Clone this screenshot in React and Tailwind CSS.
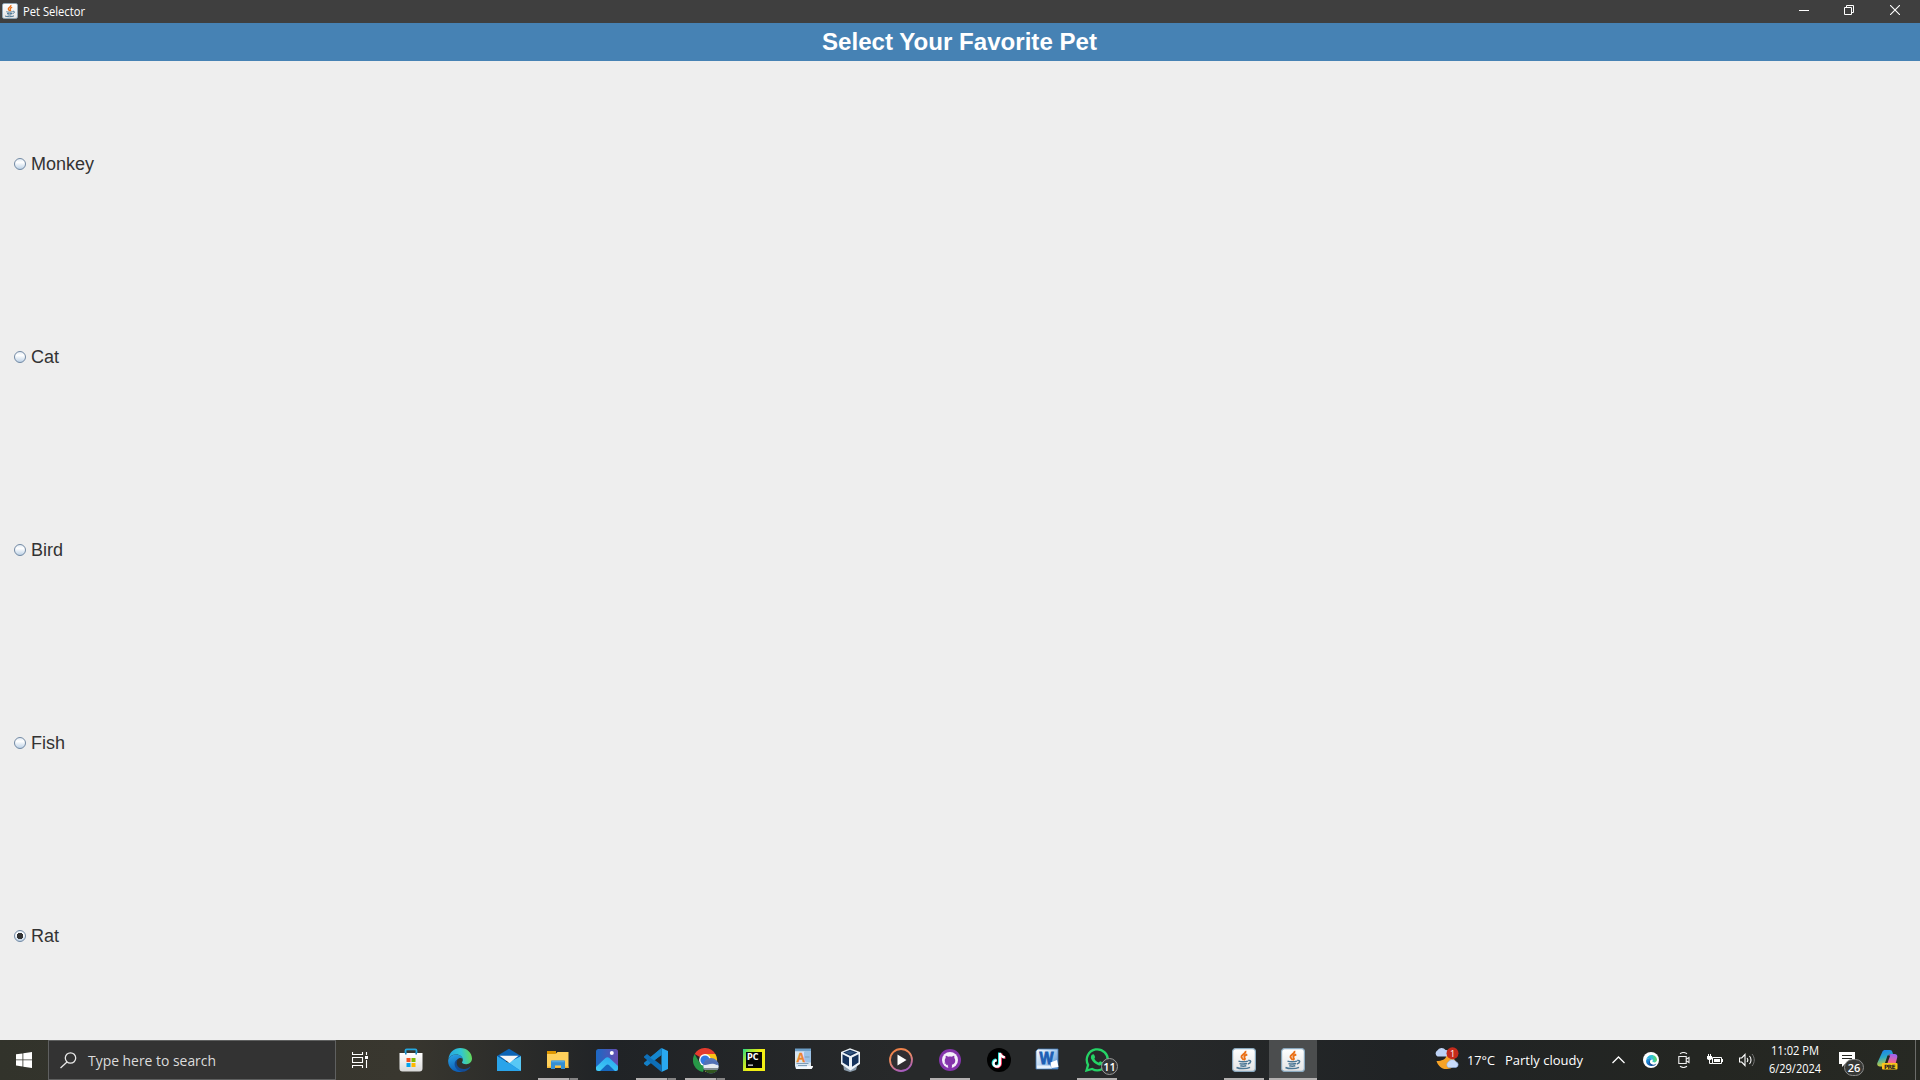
import React, { useState } from "react";

const S = ({ w = 24, h = w, children, className = "" }) => (
  <svg width={w} height={h} viewBox={`0 0 ${w} ${h}`} className={`block shrink-0 ${className}`}>
    {children}
  </svg>
);

const Java = ({ size = 24 }) => (
  <svg width={size} height={size} viewBox="0 0 24 24" className="block shrink-0">
    <defs>
      <linearGradient id="jbg" x1="0" y1="0" x2="0" y2="1">
        <stop offset="0" stopColor="#ffffff" />
        <stop offset="1" stopColor="#e4e4e4" />
      </linearGradient>
    </defs>
    <rect x=".6" y=".6" width="22.8" height="22.8" rx="3" fill="url(#jbg)" stroke="#8aa9bf" strokeWidth="1.2" />
    <path d="M13.300 3c1.500 2.600-4.600 3.800-3.900 6 .3 1.200 1.800 1.800 2 3.200M15.300 6.500c-2.300.7-3.700 1.900-2.700 3.300.6.8.4 1.600-.6 2.200" fill="none" stroke="#ea6f16" strokeWidth="1.900" />
    <path d="M6.500 13.100c2.500.9 6.500.8 9.500 0M7.500 15.600c2.500.7 5 .6 7.600 0M8.300 17.700c2 .6 4 .6 6 0M4.500 19.500c3 1.500 10 1.500 13.500-.2M16.200 12.500c3.400-.7 3.300 2.500-.4 3.500" fill="none" stroke="#4a7694" strokeWidth="1.500" />
  </svg>
);

const Store = () => (
  <S>
    <defs>
      <linearGradient id="st" x1="0" y1="0" x2="0" y2="1"><stop stopColor="#fff" /><stop offset="1" stopColor="#d9d9d9" /></linearGradient>
    </defs>
    <path d="M6.500 6V2.600c0-.8.4-1.200 1.200-1.200h8.600c.8 0 1.200.4 1.200 1.200V6" fill="none" stroke="#25a8e0" strokeWidth="1.800" />
    <path d="M.5 5h23v15.500a3 3 0 0 1-3 3h-17a3 3 0 0 1-3-3z" fill="url(#st)" />
    <path d="M6 4.500h1.600v2H6zM16.400 4.500H18v2h-1.600z" fill="#1682bd" />
    <path d="M7.500 10h4v4h-4z" fill="#f25022" /><path d="M12.500 10h4v4h-4z" fill="#7fba00" />
    <path d="M7.500 15h4v4h-4z" fill="#00a4ef" /><path d="M12.500 15h4v4h-4z" fill="#ffb900" />
  </S>
);

const Edge = ({ size = 24 }) => (
  <svg width={size} height={size} viewBox="0 0 24 24" className="block shrink-0">
    <defs>
      <linearGradient id="ea" x1="0" y1=".4" x2="1" y2=".3"><stop stopColor="#25a7e2" /><stop offset=".55" stopColor="#31c6d3" /><stop offset="1" stopColor="#68dc50" /></linearGradient>
      <linearGradient id="eb" x1="0" y1="0" x2=".3" y2="1"><stop stopColor="#2aa5e6" /><stop offset="1" stopColor="#0d60b8" /></linearGradient>
    </defs>
    <path d="M.4 11C1.200 4.400 6.300 0 12.200 0 19.200 0 24 5 24 10.500c0 3.300-2.500 5.700-5.700 5.700-3 0-4.700-1.200-4.300-2.100.4-.7.8-1.200.8-2.200C14.800 9 12 6.500 8.300 6.500 4.600 6.500 1.500 8.300.4 11z" fill="url(#ea)" />
    <path d="M.3 11.500C1.600 8.200 4.800 6.500 8.300 6.500c3.500 0 5.700 2 6.300 4.200-2.800-2-6.600.4-6.600 4.500 0 4.200 3.600 7.200 7.600 7.500-1.400.9-3 1.300-4.600 1.300C4.500 24-.8 18.500.3 11.500z" fill="url(#eb)" />
    <path d="M9.800 11.500C8.300 13 8 17 10.700 19.300c3 2.500 7.700 2.200 10.900-.4.700-.5 1 0 .6.500-2 2.600-4.500 4.100-7.500 4.300C9.600 23.300 6 19.300 6.700 15c.3-1.700 1.400-2.900 3.100-3.500z" fill="#134c96" />
  </svg>
);

const Mail = () => (
  <S>
    <path d="M0 8 12 0.800 24 8v5H0z" fill="#0b63b5" />
    <path d="M0 8.200 12 15.500 24 8.200V23H0z" fill="#2fa9ea" />
    <path d="M24 8.200V23L10.500 15z" fill="#58c8f5" />
    <path d="M0 23h24L12 14.700z" fill="#1e96e6" />
    <path d="M0 8.200 24 23H0z" fill="#2aa4ea" />
    <path d="M2.500 7.700h19L12.500 15z" fill="#f5f5f5" />
  </S>
);

const Folder = () => (
  <S>
    <path d="M1 3h9v3H1z" fill="#df9700" />
    <path d="M1 6h8.500l2-2H22.500v16H1z" fill="#ffd05b" />
    <path d="M1 18.500h21.500V20H1z" fill="#f4b735" />
    <path d="M5 13.500C5 13 5.300 12.600 6 12.600h12c.7 0 1 .4 1 .9V21h-4v-3.500H9V21H5z" fill="#348fd3" />
    <path d="M5.500 12.700h13v1.600h-13z" fill="#50a8e4" />
  </S>
);

const Photos = () => (
  <S>
    <defs>
      <linearGradient id="pa" x1="0" y1="0" x2="1" y2="0"><stop stopColor="#1b69c4" /><stop offset="1" stopColor="#654db0" /></linearGradient>
      <linearGradient id="pb" x1="0" y1="1" x2=".6" y2="0"><stop stopColor="#45d2f8" /><stop offset="1" stopColor="#2aaaf0" /></linearGradient>
      <clipPath id="pc"><rect x="1" y="1" width="22" height="22" rx="2.500" /></clipPath>
    </defs>
    <g clipPath="url(#pc)">
      <path d="M1 1h22v22H1z" fill="url(#pa)" />
      <path d="m1 19 9.500-9c1.200-1.100 2.700-1.100 3.900 0L25 20v4H1z" fill="url(#pb)" />
      <path d="m5 23 6-5.700c1-1 2.200-1 3.200 0L20 23z" fill="#1668bf" />
    </g>
    <circle cx="16.800" cy="5" r="2" fill="#fff" />
  </S>
);

const VSCode = () => (
  <S>
    <path d="M17.500 0 24 3v18l-6.500 3z" fill="#29a9f2" />
    <path d="M17.500 0v6.700L3 18.200 0 16v-1.200z" fill="#1480c7" />
    <path d="M0 8.500 3 6l14.500 11.300V24L0 9.500z" fill="#0e6fb8" />
    <path d="M17.500 0v7L10 12.500 6 9.500z" fill="#1587cf" />
  </S>
);

const Chrome = () => (
  <svg width="26" height="26" viewBox="0 0 26 26" className="block shrink-0">
    <path d="M12 12 1.600 6A12 12 0 0 1 22.400 6z" fill="#e33b2e" />
    <path d="M12 6h10.400A12 12 0 0 1 12 24l5.200-9z" fill="#fbc116" />
    <path d="M1.600 6 6.800 15 12 18l-2 6A12 12 0 0 1 1.600 6z" fill="#279847" />
    <circle cx="12" cy="12" r="5.900" fill="#fff" /><circle cx="12" cy="12" r="4.600" fill="#3278e2" />
    <clipPath id="av"><circle cx="18" cy="17.800" r="7.700" /></clipPath>
    <g clipPath="url(#av)">
      <path d="M10 10h16v16H10z" fill="#5878bd" />
      <path d="M10 18c3-5 9-5 16 0v3H10z" fill="#e5eaf1" />
      <path d="M10 15c5-4 9-3 16 0l-2 2c-6-3-8 0-14 0z" fill="#5271b5" />
      <path d="M10 20h16v2H10z" fill="#828d95" /><path d="M10 22h16v4H10z" fill="#31551f" />
    </g>
  </svg>
);

const PyCharm = () => (
  <S>
    <defs><linearGradient id="py" x1="0" y1="0" x2=".6" y2=".4"><stop stopColor="#22d88b" /><stop offset=".5" stopColor="#a5e634" /><stop offset="1" stopColor="#f2ee15" /></linearGradient></defs>
    <path d="M1 1h22v22H1z" fill="url(#py)" /><path d="M4 4h16v16H4z" fill="#060606" />
    <text x="5" y="12" fill="#fff" fontSize="8.500" fontWeight="700" textLength="11.500" lengthAdjust="spacingAndGlyphs" fontFamily="DejaVu Sans, sans-serif">PC</text>
    <path d="M6 16.500h5v1.300H6z" fill="#ddd" />
  </S>
);

const WordPad = () => (
  <S>
    <path d="M4 1h16v17l1 3H5L4 18z" fill="#dbe8f4" /><path d="M4 .5h16v3H4z" fill="#6d9fc8" />
    <path d="M4 3.500h10v11H4z" fill="#d9e5f1" /><path d="M13 3.500h7v11h-7z" fill="#9cc2e6" />
    <text x="5.500" y="13.500" fill="#ee842b" stroke="#ee842b" strokeWidth=".4" fontSize="12" fontWeight="700" fontFamily="Liberation Sans, sans-serif">A</text>
    <path d="M14 9h4.500M5.500 15.500h12M7 17.500h9" stroke="#7e9eb9" />
    <path d="M16 18h6c0 1.800-1 2.700-2 2.700H6.500c-1 0-1.500-.7-1.500-1.500h11z" fill="#f9fbfd" />
  </S>
);

const VBox = () => (
  <S>
    <path d="M5 15h15l-2 7-6 2-6-2z" fill="#8c9dad" />
    <path d="M12 .3 22 4v12l-9.500 6.500L3 16V4z" fill="#edf3f8" />
    <path d="M12 1.700 19.500 4.500 12.300 8 5 4.500zM4.500 6.300l6.500 3.200v9L4.500 14.500zM20.500 6.300v8.200L14 18.700V9.500z" fill="#15325b" />
    <path d="m7 4.600 5-1.600 5 1.600-5 2z" fill="#31557f" />
  </S>
);

const Media = () => (
  <S>
    <defs><linearGradient id="me" x1=".2" y1="0" x2=".6" y2="1"><stop stopColor="#ef7f43" /><stop offset=".45" stopColor="#ec8b63" /><stop offset="1" stopColor="#a55bc0" /></linearGradient></defs>
    <circle cx="12" cy="12" r="11" fill="#302e32" stroke="url(#me)" strokeWidth="1.800" />
    <path d="M8.500 6.500v11l9-5.500z" fill="#fff" />
  </S>
);

const GitHub = () => (
  <S>
    <circle cx="12" cy="12" r="11" fill="#8534ac" />
    <circle cx="12" cy="12" r="8" fill="#f4effa" />
    <path d="M9.900 20.500v-3c-2.700-.4-4-1.900-4-4.800 0-1.300.4-2.200 1.100-2.900-.2-.8-.2-1.800.2-2.600 1 0 1.800.5 2.500 1 1.500-.4 3.100-.4 4.600 0 .7-.5 1.500-1 2.500-1 .4.800.4 1.800.2 2.600.7.7 1.100 1.600 1.100 2.900 0 2.900-1.300 4.400-4 4.800v3z" fill="#8534ac" transform="translate(12 12) scale(.86) translate(-12 -12)" />
    <path d="M6.500 15c1.400.2 1.300 2.200 3.800 1.800" stroke="#8534ac" strokeWidth=".9" fill="none" />
    <path d="M10.300 16.500h3.400v4.500h-3.400z" fill="#8534ac" />
  </S>
);

const TikTok = () => (
  <S>
    <circle cx="12" cy="12" r="12" fill="#000" />
    <g fill="none" strokeWidth="2.600">
      <path d="M12.300 4.500v10.500a3.200 3.200 0 1 1-3.200-3.200M12.300 5c.4 2.500 2 4 4.800 4.200" stroke="#26e5dc" />
      <path d="M13.700 5.500v10.500a3.200 3.200 0 0 1-5.500 2M14 5.500c.4 2.500 2 4 4.500 4.200" stroke="#f52c56" />
      <path d="M13 5v10.500a3.200 3.200 0 1 1-3.200-3.200M13 5c.4 2.500 2 4 4.800 4.200" stroke="#fff" strokeWidth="2.200" />
    </g>
  </S>
);

const Word = () => (
  <S>
    <defs><linearGradient id="wo" x1="0" y1="0" x2="1" y2=".8"><stop stopColor="#fff" /><stop offset=".5" stopColor="#b9d5f3" /><stop offset="1" stopColor="#5b93d2" /></linearGradient></defs>
    <path d="M3 1h20v20H1V3z" fill="url(#wo)" stroke="#4278b5" strokeWidth=".8" />
    <text x="4.500" y="16" fill="#1c5fb4" stroke="#1c5fb4" strokeWidth=".9" fontSize="16.500" fontWeight="700" textLength="14" lengthAdjust="spacingAndGlyphs" fontFamily="Liberation Sans, sans-serif">W</text>
    <path d="m15.500 14.500 6.500-2.500 1.500 7-7 1z" fill="#fff" /><path d="M2 17.500h13l2 3H2z" fill="#e8f1fb" />
  </S>
);

const WhatsApp = () => (
  <S>
    <path d="m1.500 22.500 1.600-5.600A10.500 10.500 0 1 1 7.200 21z" fill="none" stroke="#25d366" strokeWidth="2.300" />
    <path d="M8.400 6.200c.5 0 .7.200.9.700l.8 2c.1.400-.8 1.500-.8 1.700.8 1.900 2.200 3.200 4.200 4 .4 0 1.200-1.400 1.700-1.400l2.300 1.100c.4.200.3 1.100 0 1.700-.7 1.300-2.600 1.700-4 1.200-3.700-1.200-5.700-3.300-7.200-6.100-.8-1.700-.3-4.900 2.100-4.900z" fill="#25d366" />
  </S>
);

const Weather = () => (
  <S w={25}>
    <path d="M14 5c-1 5-5 9-11.500 9C4 19 8 22.500 13 22c5 0 8.500-3 9-7.500z" fill="#f6a328" />
    <path d="M12 9c0 3-3 4.500-9.500 5L2 10z" fill="#202325" />
    <path d="M3.500 9.500a3.400 3.400 0 0 1-.2-6A5 5 0 0 1 11.600 3c2.500-.2 3.500 1.500 3.200 3.300 0 2-1.300 3.200-3 3.200z" fill="#bdd2f5" />
    <path d="M14.500 20.500a3.200 3.200 0 0 1 0-5.700 4.300 4.300 0 0 1 7.400-.1 3 3 0 0 1 .1 5.800z" fill="#c8dbfa" stroke="#8aabe0" strokeWidth=".6" />
    <circle cx="18.500" cy="6.200" r="6" fill="#c42b1c" />
    <text x="18.500" y="9.500" textAnchor="middle" fill="#fff" fontSize="9" fontFamily="Open Sans, sans-serif">1</text>
  </S>
);

const Copilot = () => (
  <S w={21} h={21}>
    <defs>
      <linearGradient id="ca" x1="0" y1="0" x2=".2" y2="1"><stop stopColor="#1b7cf2" /><stop offset=".5" stopColor="#2ba9c5" /><stop offset="1" stopColor="#c9cb35" /></linearGradient>
      <linearGradient id="cb" x1=".5" y1="0" x2=".3" y2="1"><stop stopColor="#9a63f2" /><stop offset=".6" stopColor="#ef6494" /><stop offset="1" stopColor="#f79a50" /></linearGradient>
    </defs>
    <path d="M5.500 1.500C6 .5 7 0 8 0h5c1.400 0 2 .8 2.400 2l.6 2h-2c-2 0-2.600 1-3 2.500L8.500 14C8 15.600 7 16.500 5.500 16.500H3C.8 16.500-.2 15 .3 13z" fill="url(#ca)" />
    <path d="M11 6.500C11.500 5 12.200 4 14 4h3.500c2.200 0 3.200 1.500 2.700 3.500L18 16H8.200z" fill="url(#cb)" />
    <path d="M10.500 5.500h2.700L10.500 13H8z" fill="#252722" />
    <rect x="5" y="13" width="15.500" height="6.500" rx="1" fill="#fcc51b" />
    <text x="7" y="18.500" fill="#222" fontSize="6" fontWeight="700" textLength="11.500" fontFamily="DejaVu Sans, sans-serif">PRE</text>
  </S>
);

const apps = [
  { I: Store }, { I: Edge }, { I: Mail }, { I: Folder, run: "multi" }, { I: Photos },
  { I: VSCode, run: "multi" }, { I: Chrome, run: "multi", shift: "translate-x-px translate-y-px" }, { I: PyCharm }, { I: WordPad },
  { I: VBox, shift: "-translate-x-0.5" }, { I: Media }, { I: GitHub, run: "one" }, { I: TikTok }, { I: Word, shift: "-translate-x-px" },
  { I: WhatsApp, run: "one", badge: "11" }, {}, {}, { I: Java, run: "one" }, { I: Java, run: "active" },
];

const TaskButton = ({ I, run, badge, shift = "" }) => (
  <div className={`relative flex h-10 w-12 items-center justify-center ${run === "active" ? "bg-[#4b4d4e]" : ""}`}>
    {I && <div className={shift}><I /></div>}
    {badge && (
      <span className="absolute left-[28px] top-[18px] flex size-[17px] items-center justify-center rounded-full border border-[#999] bg-[#333536] text-[11px] font-semibold leading-none text-white">{badge}</span>
    )}
    {run && (
      <div className={`absolute bottom-0 flex h-0.5 ${run === "active" ? "w-12" : "w-10"}`}>
        <div className="flex-1 bg-[#b3b0b0]" />
        {run === "multi" && <div className="w-[9px] border-l border-[#555] bg-[#858484]" />}
      </div>
    )}
  </div>
);

const Fit = ({ w, size, color = "#fff", y, h, children, weight = 400, font = "Open Sans, Noto Sans, sans-serif" }) => (
  <svg width={w} height={h} className="block shrink-0 overflow-visible">
    <text x="0" y={y} fontSize={size} fill={color} fontWeight={weight} textLength={w} lengthAdjust="spacingAndGlyphs" fontFamily={font}>{children}</text>
  </svg>
);

const Radio = ({ checked }) => (
  <S w={12}>
    <defs><linearGradient id="rad" x1="0" y1="0" x2="0" y2="1"><stop stopColor="#dfe9f3" /><stop offset=".35" stopColor="#ffffff" /><stop offset="1" stopColor="#b9cfe5" /></linearGradient></defs>
    <circle cx="6" cy="6" r="5.500" fill="url(#rad)" stroke="#7289a3" />
    {checked && <path d="M4 3h4v1h1v4H8v1H4V8H3V4h1z" fill="#333" />}
  </S>
);

const pets = ["Monkey", "Cat", "Bird", "Fish", "Rat"];

export default function App() {
  const [pet, setPet] = useState("Rat");
  return (
    <div className="flex h-[1080px] w-[1920px] flex-col overflow-hidden bg-[#eeeeee] font-['Open_Sans','Noto_Sans',sans-serif]">
      <header className="flex h-[23px] shrink-0 items-center bg-[#3f3f3f]">
        <div className="ml-0.5 mb-px"><Java size={16} /></div>
        <div className="ml-[5px]"><Fit w={62} size={12} h={23} y={16}>Pet Selector</Fit></div>
        <div className="ml-auto flex h-[23px] items-start text-white">
          <S w={10} className="mr-[35px] mt-[5px]"><path d="M0 5h10v1H0z" fill="#fff" /></S>
          <S w={10} className="mr-[36px] mt-[5px]"><path d="M.5 2.500h7v7h-7zM2.500 2.500v-2h7v7h-2" fill="none" stroke="#fff" /></S>
          <S w={10} className="mr-[20px] mt-[5px]"><path d="m0 0 10 10M10 0 0 10" stroke="#fff" strokeWidth="1.100" /></S>
        </div>
      </header>
      <h1 className="flex h-[38px] shrink-0 justify-center bg-[#4682b4] pr-[2px]">
        <Fit w={275} size={24} h={38} y={27} weight={700} font="Liberation Sans, Arial, sans-serif">Select Your Favorite Pet</Fit>
      </h1>
      <main className="flex flex-1 flex-col pt-[6px]">
        {pets.map((name) => (
          <div key={name} onClick={() => setPet(name)} className="flex h-[193px] items-center pl-[14px] font-['Liberation_Sans',Arial,sans-serif] text-lg leading-5 text-[#333]">
            <Radio checked={pet === name} />
            <span className="ml-[5px]">{name}</span>
          </div>
        ))}
      </main>
      <footer className="flex h-10 shrink-0 bg-[linear-gradient(90deg,#32332b_0,#39372f_400px,#202326_610px,#27292a_900px,#27292a_1150px,#202325_1400px,#242622_1700px,#272923_1920px)]">
        <div className="flex w-12 items-center justify-center">
          <S w={16}><path d="M0 2.300 6.500 1.400v6H0zM7.300 1.300 16 0v7.400H7.300zM0 8.300h6.500v6.200L0 13.600zM7.300 8.300H16V16l-8.700-1.300z" fill="#fff" /></S>
        </div>
        <div className="flex w-72 items-center border border-[#5f6060] bg-[#333333] pl-[11px]">
          <S w={17}><circle cx="10.500" cy="6" r="5.200" fill="none" stroke="#e8e8e8" strokeWidth="1.300" /><path d="M7 10 .5 16" stroke="#e8e8e8" strokeWidth="1.300" /></S>
          <div className="ml-[11px]"><Fit w={128} size={15} color="#dcdcdc" h={38} y={25}>Type here to search</Fit></div>
        </div>
        <div className="flex w-[51px] items-center pl-4">
          <S w={16}><path d="M.5 0v2.500h10V0M.5 16v-2.500h10V16M.5 5.500h10v5H.5zM14.500 0v3M14.500 8v8" fill="none" stroke="#fff" strokeWidth="1.100" /><path d="M13 4h3v3h-3z" fill="#fff" /></S>
        </div>
        <div className="flex gap-px">
          {apps.map((a, i) => <TaskButton key={i} {...a} />)}
        </div>
        <div className="ml-auto flex w-[486px] items-center">
          <div className="pb-px"><Weather /></div>
          <div className="ml-[8px]"><Fit w={28} size={13.500} h={40} y={25}>17°C</Fit></div>
          <div className="ml-[10px]"><Fit w={78} size={13.500} h={40} y={25}>Partly cloudy</Fit></div>
          <S w={13} h={8} className="ml-[29px]"><path d="m.5 7 6-6 6 6" fill="none" stroke="#fff" strokeWidth="1.300" /></S>
          <div className="ml-[18px] flex size-4 items-center justify-center rounded-full bg-white"><Edge size={11} /></div>
          <S w={12} h={16} className="ml-[19px]"><path d="M.8 4.500h7.400v7H.8zM8.500 7l2.500-1.500v5L8.500 9M2 1.700C4 .3 7 .3 9 1.700M2 14.300c2 1.400 5 1.400 7 0" fill="none" stroke="#eee" strokeWidth="1.100" /></S>
          <S w={16} h={12} className="ml-[17px]"><path d="M5.500 3.500h9v6h-9z" fill="none" stroke="#fff" /><path d="M7 5h6v3H7zM15 5h1v3h-1zM0 2h5v3L3.500 6h-2L0 5zM1 0h1v2H1zM3 0h1v2H3z" fill="#fff" /><path d="M2.500 6v3.500h3" fill="none" stroke="#fff" /></S>
          <S w={17} h={14} className="ml-[16px]"><path d="M.5 5h2.200L6 1.500v11L2.700 9H.5zM8 5c1 1.200 1 2.800 0 4M10.500 3c2 2.200 2 5.800 0 8" fill="none" stroke="#fff" strokeWidth="1.100" /><path d="M13 1c3 3.500 3 8.500 0 12" fill="none" stroke="#777" /></S>
          <div className="ml-[13px] flex w-[52px] flex-col items-center">
            <Fit w={48} size={12} h={18} y={13}>11:02 PM</Fit>
            <Fit w={52} size={12} h={18} y={13}>6/29/2024</Fit>
          </div>
          <div className="relative ml-[18px] h-4 w-4">
            <S w={16} h={16}><path d="M0 0h16v12H6l-3 3v-3H0z" fill="#fff" /><path d="M3 3.500h10M3 6.500h10" stroke="#252722" /></S>
            <span className="absolute left-[5px] top-[7px] flex h-[17px] w-[20px] items-center justify-center rounded-full border border-[#8b8b8b] bg-[#373936] text-[11px] font-semibold leading-none text-white">26</span>
          </div>
          <div className="ml-[22px] pt-px"><Copilot /></div>
          <div className="ml-auto h-10 w-[5px] border-l border-[#6b6c69]" />
        </div>
      </footer>
    </div>
  );
}
